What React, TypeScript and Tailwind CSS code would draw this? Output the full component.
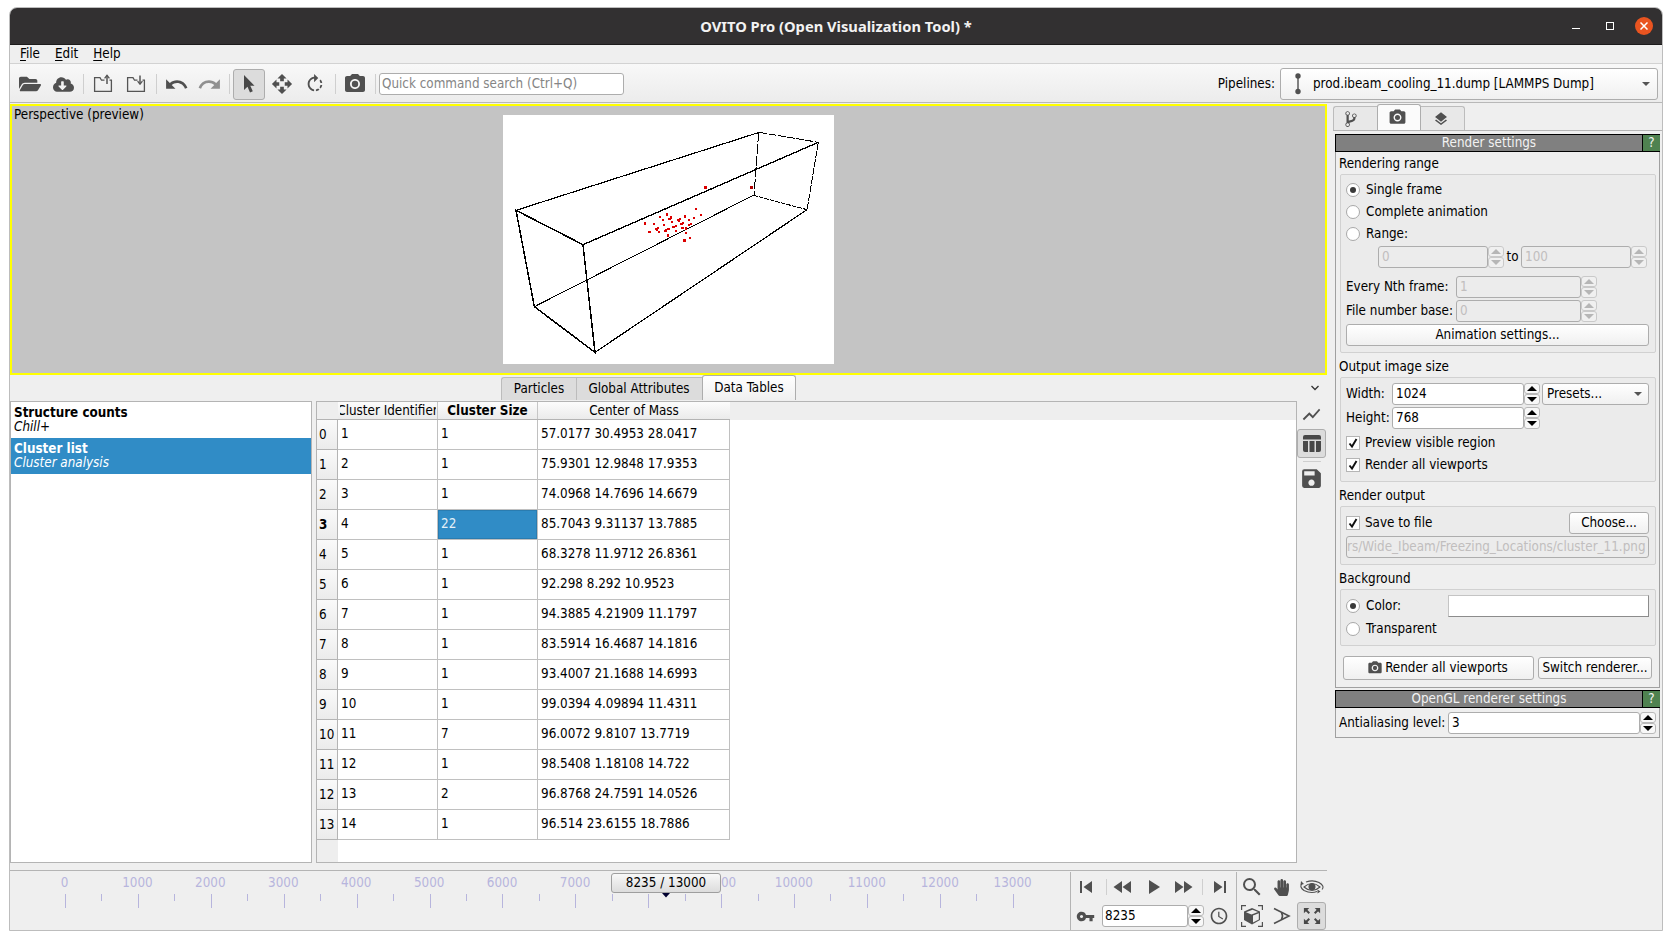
import React from "react";
import {
  MdPhotoCamera, MdUndo, MdRedo, MdOpenWith, MdRotateRight, MdLayers, MdShowChart, MdSave,
  MdSkipPrevious, MdSkipNext, MdFastForward, MdFastRewind, MdPlayArrow, MdVpnKey, MdAccessTime, MdSearch,
} from "react-icons/md";
import { FaFolderOpen, FaCloudDownloadAlt, FaHandPaper } from "react-icons/fa";
import { IoMdGitBranch } from "react-icons/io";

const rows = [
  ["1", "1", "57.0177 30.4953 28.0417"],
  ["2", "1", "75.9301 12.9848 17.9353"],
  ["3", "1", "74.0968 14.7696 14.6679"],
  ["4", "22", "85.7043 9.31137 13.7885"],
  ["5", "1", "68.3278 11.9712 26.8361"],
  ["6", "1", "92.298 8.292 10.9523"],
  ["7", "1", "94.3885 4.21909 11.1797"],
  ["8", "1", "83.5914 16.4687 14.1816"],
  ["9", "1", "93.4007 21.1688 14.6993"],
  ["10", "1", "99.0394 4.09894 11.4311"],
  ["11", "7", "96.0072 9.8107 13.7719"],
  ["12", "1", "98.5408 1.18108 14.722"],
  ["13", "2", "96.8768 24.7591 14.0526"],
  ["14", "1", "96.514 23.6155 18.7886"],
];

const dots: [number, number][] = [
  [645, 261], [618, 327], [634, 346], [464, 370], [477, 396], [509, 351], [531, 343], [519, 361], [538, 356], [542, 352],
  [493, 372], [498, 387], [503, 383], [506, 397], [523, 376], [529, 391], [533, 387], [536, 387], [534, 405], [545, 367],
  [549, 380], [558, 377], [558, 393], [564, 360], [569, 356], [572, 371], [578, 370], [585, 348], [596, 359], [597, 375],
  [604, 371], [613, 353], [576, 384], [588, 384], [587, 398], [600, 414], [582, 421], [501, 390], [526, 393], [567, 360], [575, 371],
];

function Sep({ className = "" }: { className?: string }) {
  return <div className={`h-5 w-px shrink-0 bg-[#cfcfcf] ${className}`} />;
}

function Spin({ disabled = false }: { disabled?: boolean }) {
  const c = disabled ? "#b6b6b6" : "#000";
  const box = `flex flex-1 items-center justify-center rounded-[3px] border ${disabled ? "border-[#c9c9c9] bg-[#f0f0f0]" : "border-[#b9b9b9] bg-[#f8f8f8]"}`;
  return (
    <div className="flex h-[22px] w-4 shrink-0 flex-col">
      <div className={box}><svg width="10" height="5"><path d="M0 5L5 0L10 5z" fill={c} /></svg></div>
      <div className={box}><svg width="10" height="5"><path d="M0 0L5 5L10 0z" fill={c} /></svg></div>
    </div>
  );
}

function Field({ value, className = "", disabled = false }: { value: string; className?: string; disabled?: boolean }) {
  return (
    <div className={`flex h-[22px] shrink-0 items-center overflow-hidden rounded-[3px] border border-[#adadad] px-[3px] whitespace-nowrap ${disabled ? "bg-[#ececec] text-[#c1bebe]" : "bg-white"} ${className}`}>{value}</div>
  );
}

function Button({ children, className = "" }: { children: React.ReactNode; className?: string }) {
  return (
    <div className={`flex shrink-0 items-center justify-center rounded-[3px] border border-[#adadad] bg-linear-to-b from-white to-[#f0f0f0] whitespace-nowrap ${className}`}>{children}</div>
  );
}

function Radio({ label, on = false }: { label: string; on?: boolean }) {
  return (
    <div className="flex h-[22px] items-center gap-[6px]">
      <div className="flex size-[14px] items-center justify-center rounded-full border border-[#a8a8a8] bg-white">
        {on && <div className="size-[6px] rounded-full bg-[#3a3a3a]" />}
      </div>
      <span>{label}</span>
    </div>
  );
}

function Check({ label }: { label: string }) {
  return (
    <div className="flex h-[22px] items-center gap-[5px]">
      <div className="size-[14px] border border-[#b5b5b5] bg-white">
        <svg width="12" height="12" viewBox="0 0 12 12"><path d="M2.5 6.5L5 9.5L9.5 2" fill="none" stroke="#111" strokeWidth="1.9" /></svg>
      </div>
      <span>{label}</span>
    </div>
  );
}

function Rollup({ title }: { title: string }) {
  return (
    <div className="flex h-[18px] w-[325px] border-y border-l border-black bg-[#808080] text-[#f2f2f2]">
      <div className="flex flex-1 items-center justify-center pb-px">{title}</div>
      <div className="flex w-[18px] items-center justify-center border-l border-black bg-[#4f8250] pb-px">?</div>
    </div>
  );
}

function GroupLabel({ children, className = "" }: { children: React.ReactNode; className?: string }) {
  return <div className={`flex h-5 items-center pl-[3px] ${className}`}>{children}</div>;
}

const groupBox = "ml-1 w-[316px] rounded-[2px] border border-[#d1d1d1] bg-[#ebebeb] pl-[5px]";

function FolderArrow({ down = false }: { down?: boolean }) {
  return (
    <svg width="20" height="20" viewBox="0 0 20 20" className="shrink-0" fill="none" stroke="#555" strokeWidth="1.3">
      <path d="M11.5 6.2H8.5L7 3.6H1.6V17.4H18.4V6.2H16.5" />
      <path d="M14 1.5V10" strokeWidth="1.5" />
      {down ? <path d="M11.6 7.2L14 10.2L16.4 7.2" /> : <path d="M11.6 4.4L14 1.4L16.4 4.4" />}
    </svg>
  );
}

function Toolbar() {
  return (
    <div className="flex h-[39px] shrink-0 items-center border-b border-[#b8b8b8] bg-linear-to-b from-[#f8f8f8] to-[#ececec] pt-[2px] text-[#505050]">
      <FaFolderOpen className="ml-[9px] shrink-0" size={22} />
      <FaCloudDownloadAlt className="ml-3 shrink-0" size={21} />
      <Sep className="ml-[9px]" />
      <div className="ml-[9px]"><FolderArrow /></div>
      <div className="ml-[13px]"><FolderArrow down /></div>
      <Sep className="ml-[10px]" />
      <MdUndo className="ml-[7px] shrink-0" size={25} />
      <MdRedo className="ml-2 shrink-0 text-[#909090]" size={25} />
      <Sep className="ml-[7px]" />
      <div className="ml-[3px] flex h-[31px] w-8 shrink-0 items-center justify-center rounded-[3px] border border-[#adadad] bg-[#dcdcdc]">
        <svg width="12" height="20" viewBox="0 0 12 20"><path d="M1 1V16L4.5 12.8L7 18.5L9.8 17.3L7.3 11.8H11.5Z" fill="#484848" /></svg>
      </div>
      <MdOpenWith className="ml-[6px] shrink-0" size={22} />
      <MdRotateRight className="ml-[11px] shrink-0" size={22} />
      <Sep className="ml-[9px]" />
      <MdPhotoCamera className="ml-[7px] shrink-0" size={24} />
      <Sep className="ml-2" />
      <div className="ml-[3px] flex h-[22px] w-[245px] shrink-0 items-center rounded-[3px] border border-[#adadad] bg-white pl-[2px] text-[#858585]">Quick command search (Ctrl+Q)</div>
      <div className="flex-1" />
      <span className="mr-[5px] text-black">Pipelines:</span>
      <Button className="mr-1 h-8 w-[378px] !justify-start text-black">
        <svg width="8" height="22" viewBox="0 0 8 22" className="ml-[13px]"><path d="M4 3V19" stroke="#505050" strokeWidth="1.4" /><circle cx="4" cy="3" r="2.7" fill="#505050" /><circle cx="4" cy="18.5" r="2.7" fill="#505050" /></svg>
        <span className="ml-[11px]">prod.ibeam_cooling_11.dump [LAMMPS Dump]</span>
        <svg width="8" height="4" className="mr-[7px] ml-auto"><path d="M0 0H8L4 4z" fill="#555" /></svg>
      </Button>
    </div>
  );
}

function Viewport() {
  return (
    <div className="flex h-[271px] w-[1317px] items-center justify-center border-2 border-[#ffff00] bg-[#c4c4c4]">
      <div className="relative flex size-full items-center justify-center">
        <span className="absolute top-0 left-[2px] leading-[18px]">Perspective (preview)</span>
        <svg width="331" height="249" viewBox="39 45 993 747" className="bg-white" fill="none" stroke="#000" strokeWidth="3" shapeRendering="crispEdges">
          <path d="M133 620L790 286" strokeWidth="3" />
          <path d="M78 331L808 97M951 329L315 757" strokeWidth="3.6" />
          <path d="M985 127L279 434" strokeWidth="4" />
          <path d="M279 434L78 331L133 620L315 757Z" strokeWidth="4.4" />
          <path d="M808 97L985 127" strokeDasharray="24 4" />
          <path d="M806 97L792 286" strokeDasharray="30 5" />
          <path d="M985 127L951 329" strokeDasharray="22 4" />
          <path d="M790 286L951 329" strokeDasharray="14 3" />
          <g fill="#dc0000" stroke="none">
            {dots.map(([x, y], i) => <rect key={i} x={x - 3} y={y - 3} width={i % 4 ? 6 : 8} height={i % 3 ? 6 : 8} />)}
            <rect x="779" y="258" width="9" height="8" fill="#b00000" />
          </g>
        </svg>
      </div>
    </div>
  );
}

function DataTable() {
  const head = "flex h-full items-center justify-center overflow-hidden whitespace-nowrap border-r border-[#c6c6c6]";
  return (
    <div className="h-[462px] w-[981px] overflow-hidden border border-[#b4b4b4] bg-white">
      <div className="flex h-[18px] bg-[#eeeeee]">
        <div className="h-full w-[21px] shrink-0 border-b border-[#b4b4b4]" />
        <div className="flex h-full w-[392px] border-b border-[#b4b4b4] bg-linear-to-b from-[#fcfcfc] to-[#ebebeb]">
          <div className={`${head} w-[100px]`}><div className="flex w-[96px] justify-center overflow-hidden">Cluster Identifier</div></div>
          <div className={`${head} w-[100px] font-bold`}>Cluster Size</div>
          <div className="flex h-full flex-1 items-center justify-center">Center of Mass</div>
        </div>
      </div>
      {rows.map((r, i) => (
        <div key={i} className="flex h-[30px]">
          <div className={`flex w-[21px] items-center border-r border-b border-[#b4b4b4] bg-linear-to-b from-[#fafafa] to-[#ebebeb] pl-[2px] ${i === 3 ? "font-bold" : ""}`}>{i}</div>
          <div className="flex w-[100px] items-center border-r border-b border-[#c0c0c0] pb-px pl-[3px]">{r[0]}</div>
          <div className={`flex w-[100px] items-center border-r border-b border-[#c0c0c0] pb-px pl-[3px] ${i === 3 ? "bg-[#308cc6] text-[#e4f0f8] shadow-[inset_0_0_0_1px_#2a7cb0]" : ""}`}>{r[1]}</div>
          <div className="flex w-48 items-center border-r border-b border-[#c0c0c0] pb-px pl-[3px]">{r[2]}</div>
        </div>
      ))}
      <div className="h-6 w-[21px] bg-[#eeeeee]" />
    </div>
  );
}

function Inspector() {
  return (
    <div className="flex h-[495px] flex-col">
      <div className="flex h-[26px] items-end">
        <div className="ml-[491px] flex h-[23px] w-[75px] items-center justify-center self-center rounded-tl-[3px] border border-r-0 border-b-0 border-[#bcbcbc] bg-[#dcdcdc]">Particles</div>
        <div className="flex h-[23px] w-[126px] items-center justify-center self-center border border-r-0 border-b-0 border-[#bcbcbc] bg-[#dcdcdc] pr-px">Global Attributes</div>
        <div className="mb-px flex h-[25px] w-[94px] items-center justify-center rounded-t-[3px] border border-b-0 border-[#adadad] bg-linear-to-b from-white to-[#f0f0f0] pb-px">Data Tables</div>
        <div className="flex-1" />
        <svg width="10" height="6" viewBox="0 0 10 6" className="mr-[7px] mb-[10px]" fill="none" stroke="#333" strokeWidth="1.3"><path d="M1.5 1L5 4.5L8.5 1" /></svg>
      </div>
      <div className="flex">
        <div className="mr-1 h-[462px] w-[302px] border border-[#b4b4b4] bg-white">
          <div className="h-9 pt-1 pl-[3px] leading-[14px]"><div className="font-bold">Structure counts</div><div className="italic">Chill+</div></div>
          <div className="h-9 bg-[#308cc6] pt-1 pl-[3px] leading-[14px] text-white"><div className="font-bold">Cluster list</div><div className="italic">Cluster analysis</div></div>
        </div>
        <DataTable />
        <div className="flex w-[30px] flex-col items-center pr-px text-[#505050]">
          <MdShowChart size={21} className="mt-[3px]" />
          <div className="mt-1 flex h-[29px] w-[29px] items-center justify-center rounded-[3px] border border-[#adadad] bg-[#dcdcdc]">
            <svg width="18" height="17" viewBox="0 0 18 17" fill="#484848"><path d="M2 0H16Q18 0 18 2V4.5H0V2Q0 0 2 0ZM0 6H5V17H2Q0 17 0 15ZM6.5 6H11.5V17H6.5ZM13 6H18V15Q18 17 16 17H13Z" /></svg>
          </div>
          <div className="mt-[3px] h-px w-[18px] bg-[#cfcfcf]" />
          <MdSave size={25} className="mt-1" />
        </div>
      </div>
    </div>
  );
}

function Timeline() {
  return (
    <div className="relative h-[59px] w-[1060px] overflow-hidden">
      <div className="ml-[18px] flex h-[23px] items-center text-[#b7b5dd]">
        {Array.from({ length: 14 }, (_, i) => <div key={i} className="w-[72.95px] shrink-0 text-center">{i === 8 ? "" : i * 1000}</div>)}
      </div>
      <svg width="1060" height="15" className="block" stroke="#b7b5dd" shapeRendering="crispEdges">
        {Array.from({ length: 27 }, (_, i) => <line key={i} x1={Math.round(55 + i * 36.45) + 0.5} x2={Math.round(55 + i * 36.45) + 0.5} y1="0" y2={i % 2 ? 7 : 14} />)}
      </svg>
      <div className="absolute top-[2px] left-[601px] flex h-5 w-[110px] items-center justify-center rounded-[3px] border border-[#9e9e9e] bg-linear-to-b from-[#f8f8f8] to-[#dcdcdc]">8235 / 13000</div>
      <svg width="8" height="5" className="absolute top-[22px] left-[652px]"><path d="M0 0H8L4 4.5z" fill="#000030" /></svg>
    </div>
  );
}

function Controls() {
  return (
    <div className="flex h-[59px] flex-1 pt-px text-[#505050]">
      <div className="flex w-[167px] flex-col border-x border-[#b4b4b4]">
        <div className="flex h-[30px] items-center">
          <MdSkipPrevious size={24} className="ml-[3px] shrink-0" />
          <Sep className="ml-2 !h-4" />
          <MdFastRewind size={24} className="ml-1 shrink-0" />
          <MdPlayArrow size={24} className="ml-[6px] shrink-0" />
          <MdFastForward size={24} className="ml-[6px] shrink-0" />
          <Sep className="ml-[7px] !h-4" />
          <MdSkipNext size={24} className="ml-[5px] shrink-0" />
        </div>
        <div className="flex h-7 items-center text-black">
          <MdVpnKey size={19} className="mr-[7px] ml-[5px] shrink-0 text-[#505050]" />
          <Field value="8235" className="w-[86px] !pl-[2px]" />
          <Spin />
          <MdAccessTime size={20} className="ml-[5px] shrink-0 text-[#505050]" />
        </div>
      </div>
      <div className="flex flex-1 flex-col">
        <div className="flex h-[30px] items-center">
          <MdSearch size={24} className="ml-[3px] shrink-0" />
          <FaHandPaper size={17} className="ml-[9px] shrink-0" />
          <svg width="24" height="16" viewBox="0 0 24 16" className="ml-[10px]" fill="none" stroke="#505050" strokeWidth="1.1">
            <path d="M2 4.5Q-1 8 4 11.5Q11 15 17 12.5M22 10.5Q25 7 19 3.5Q13 0.5 6 3" /><path d="M4 8Q12 1 20 8Q12 15 4 8Z" /><circle cx="12" cy="7.8" r="3" fill="#505050" /><path d="M1 2L4 5L0.5 6Z M17.5 10.5L20.5 12.5L17.5 14.5Z" fill="#505050" stroke="none" />
          </svg>
        </div>
        <div className="flex h-7 items-center">
          <svg width="22" height="22" viewBox="0 0 22 22" className="ml-1" fill="none" stroke="#505050">
            <path d="M.6 5V.6H5M17 .6H21.4V5M21.4 17V21.4H17M5 21.4H.6V17" strokeWidth="1.2" />
            <path d="M3 6.5L11 3L19 6.5V15L11 19.5L3 15Z" fill="#505050" stroke="none" /><path d="M5 7.2L11.5 4.8L17 7L10.5 9.5Z" fill="#eee" stroke="none" /><path d="M12 10.5L17.8 8.3V14.6L12 17.5Z" fill="#eee" stroke="none" />
          </svg>
          <svg width="18" height="18" viewBox="0 0 18 18" className="ml-[10px]" fill="none" stroke="#505050" strokeWidth="1.6"><path d="M1 1.5L16 9L1 16.5" /><path d="M8.5 5.5Q10.5 9 8.5 12.5" strokeWidth="1.6" /></svg>
          <div className="ml-[6px] flex h-7 w-[29px] items-center justify-center rounded-[3px] border border-[#adadad] bg-[#dcdcdc]">
            <svg width="18" height="18" viewBox="0 0 20 20" fill="#484848" stroke="#484848" strokeWidth="2.2">
              <path d="M2 2L7 7M18 2L13 7M2 18L7 13M18 18L13 13" /><path d="M1 1H7L1 7ZM19 1H13L19 7ZM1 19H7L1 13ZM19 19H13L19 13Z" stroke="none" />
            </svg>
          </div>
        </div>
      </div>
    </div>
  );
}

function SidePanel() {
  return (
    <div className="ml-[6px] flex flex-1 flex-col pt-px">
      <div className="flex h-[27px] items-end border-b border-[#b4b4b4] text-[#505050]">
        <div className="flex h-6 w-11 items-center justify-center rounded-tl-[3px] border border-r-0 border-b-0 border-[#bcbcbc] bg-[#e8e8e8] pr-[10px]"><IoMdGitBranch size={18} /></div>
        <div className="flex h-[26px] w-11 items-center justify-center rounded-t-[3px] border border-b-0 border-[#adadad] bg-[#fbfbfb] pr-1"><MdPhotoCamera size={19} /></div>
        <div className="flex h-6 w-11 items-center justify-center rounded-tr-[3px] border border-b-0 border-l-0 border-[#bcbcbc] bg-[#e8e8e8] pr-1"><MdLayers size={16} /></div>
      </div>
      <div className="mt-[3px] ml-[2px]">
        <Rollup title="Render settings" />
        <div className="h-[536px] w-[325px] border border-t-0 border-[#a0a0a0]">
          <GroupLabel className="mb-[2px] pt-1">Rendering range</GroupLabel>
          <div className={`${groupBox} h-[179px] pt-1`}>
            <Radio label="Single frame" on />
            <Radio label="Complete animation" />
            <Radio label="Range:" />
            <div className="mt-px flex h-[22px] items-center pl-8">
              <Field value="0" disabled className="w-[110px]" /><Spin disabled />
              <span className="w-[17px] text-center">to</span>
              <Field value="100" disabled className="w-[110px]" /><Spin disabled />
            </div>
            <div className="mt-2 flex items-center"><span className="w-[110px]">Every Nth frame:</span><Field value="1" disabled className="w-[125px]" /><Spin disabled /></div>
            <div className="mt-[2px] flex items-center"><span className="w-[110px] whitespace-nowrap">File number base:</span><Field value="0" disabled className="w-[125px]" /><Spin disabled /></div>
            <Button className="mt-[2px] h-[22px] w-[303px]">Animation settings...</Button>
          </div>
          <GroupLabel className="mt-1">Output image size</GroupLabel>
          <div className={`${groupBox} h-[105px] pt-[5px]`}>
            <div className="flex items-center"><span className="w-[46px]">Width:</span><Field value="1024" className="w-[132px]" /><Spin />
              <Button className="ml-[2px] h-[22px] w-[107px] !justify-between pr-[6px] pl-1">Presets...<svg width="8" height="4"><path d="M0 0H8L4 4z" fill="#555" /></svg></Button>
            </div>
            <div className="mt-[2px] mb-[3px] flex items-center"><span className="w-[46px]">Height:</span><Field value="768" className="w-[132px]" /><Spin /></div>
            <Check label="Preview visible region" />
            <Check label="Render all viewports" />
          </div>
          <GroupLabel className="mt-1">Render output</GroupLabel>
          <div className={`${groupBox} h-[59px] pt-[5px]`}>
            <div className="flex w-[303px] items-center justify-between"><Check label="Save to file" /><Button className="h-[22px] w-20">Choose...</Button></div>
            <Field value="rs/Wide_Ibeam/Freezing_Locations/cluster_11.png" disabled className="mt-[2px] w-[303px] !px-0" />
          </div>
          <GroupLabel className="mt-1">Background</GroupLabel>
          <div className={`${groupBox} h-[57px] pt-[5px]`}>
            <div className="flex w-[303px] items-center justify-between"><Radio label="Color:" on /><div className="h-[22px] w-[201px] border border-t-[#c4c4c4] border-r-[#8c8c8c] border-b-[#8c8c8c] border-l-[#c4c4c4] bg-white" /></div>
            <div className="mt-px"><Radio label="Transparent" /></div>
          </div>
          <div className="mt-[10px] ml-[7px] flex items-center gap-1">
            <Button className="h-6 w-[191px] gap-[2px] pr-[2px]"><MdPhotoCamera size={16} className="text-[#505050]" />Render all viewports</Button>
            <Button className="h-[22px] w-[114px]">Switch renderer...</Button>
          </div>
        </div>
        <div className="mt-[2px]"><Rollup title="OpenGL renderer settings" /></div>
        <div className="flex h-[30px] w-[325px] items-center border border-t-0 border-[#a0a0a0] pl-[3px]">
          <span className="w-[109px] whitespace-nowrap">Antialiasing level:</span><Field value="3" className="w-48" /><Spin />
        </div>
      </div>
    </div>
  );
}

export default function App() {
  return (
    <div className="h-[940px] w-[1672px] bg-white px-[9px] pt-[7px] font-['DejaVu_Sans_Condensed','DejaVu_Sans',sans-serif] text-[13.33px] leading-[16px] text-black [font-stretch:condensed]">
      <div className="flex h-[924px] w-[1654px] flex-col overflow-hidden rounded-t-lg border border-[#bdbdbd] bg-[#efefef]">
        <div className="flex h-[37px] shrink-0 items-center border-b border-[#1c1b1b] bg-[#323031] text-white">
          <div className="w-[100px]" />
          <div className="flex-1 pb-px text-center font-['Noto_Sans',sans-serif] text-[14.7px] font-bold text-[#f2f2f2] [font-stretch:normal]">OVITO Pro (Open Visualization Tool) *</div>
          <div className="flex w-[100px] items-center">
            <div className="mt-[5px] ml-[10px] h-px w-2 bg-white" />
            <div className="ml-[26px] size-2 border border-white" />
            <div className="ml-[21px] flex size-[18px] items-center justify-center rounded-full bg-[#e95420]">
              <svg width="8" height="8" stroke="#fff" strokeWidth="1.5"><path d="M0.5 0.5L7.5 7.5M7.5 0.5L0.5 7.5" /></svg>
            </div>
          </div>
        </div>
        <div className="flex h-[19px] shrink-0 items-center gap-[15px] border-b border-[#d2d2d2] pl-[10px]">
          {["File", "Edit", "Help"].map((m) => <span key={m}><span className="underline underline-offset-2">{m[0]}</span>{m.slice(1)}</span>)}
        </div>
        <Toolbar />
        <div className="flex flex-1">
          <div className="flex w-[1317px] flex-col pt-px">
            <Viewport />
            <Inspector />
            <div className="flex border-t border-[#b4b4b4]">
              <Timeline />
              <Controls />
            </div>
          </div>
          <SidePanel />
        </div>
      </div>
    </div>
  );
}
